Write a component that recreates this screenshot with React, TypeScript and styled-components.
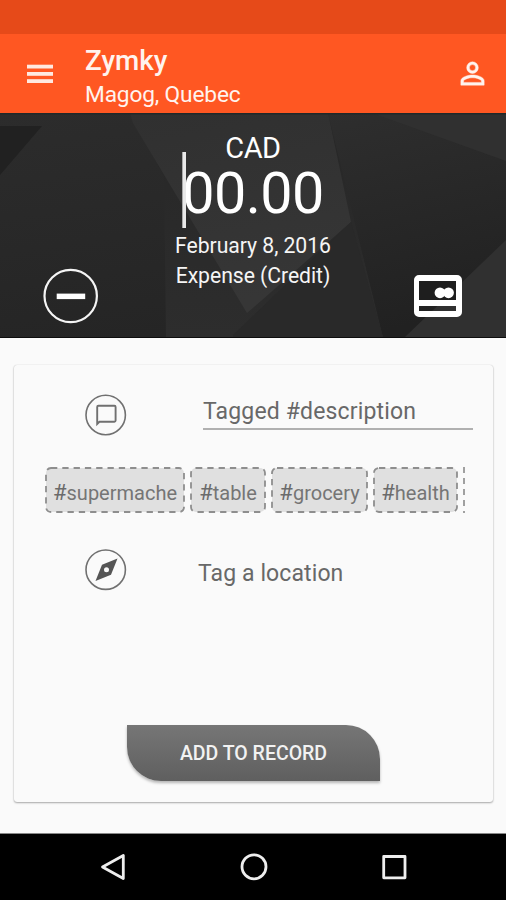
import React from "react";
import styled, { createGlobalStyle } from "styled-components";

const GlobalStyle = createGlobalStyle`
  * { box-sizing: border-box; }
  body { margin: 0; background: #fafafa; font-family: Roboto, sans-serif; }
`;

const Screen = styled.div`
  width: 506px;
  height: 900px;
  display: flex;
  flex-direction: column;
  overflow: hidden;
  background: #fafafa;
`;

const StatusBar = styled.div`
  height: 34px;
  background: #e64a19;
`;

const AppBar = styled.header`
  height: 79px;
  display: flex;
  align-items: flex-start;
  padding: 0 16px 0 27px;
  background: #ff5722;
  color: #fff3ee;
`;

const MenuButton = styled.div`
  width: 58px;
  padding-top: 30px;
  svg { display: block; }
`;

const Titles = styled.div`
  flex: 1;
  padding-top: 10px;
`;

const Title = styled.div`
  font-size: 27.8px;
  line-height: 34px;
  font-weight: 500;
`;

const Subtitle = styled.div`
  font-size: 22.7px;
  line-height: 33px;
  letter-spacing: -0.15px;
`;

const ProfileButton = styled.div`
  padding-top: 22px;
  svg { display: block; }
`;

const Hero = styled.section`
  position: relative;
  height: 225px;
  display: flex;
  justify-content: space-between;
  background: #282828;
  border-bottom: 1px solid #0d0d0d;
  color: #fff;
`;

const HeroBackdrop = styled.svg`
  position: absolute;
  inset: 0;
`;

const HeroSide = styled.div<{ $end?: boolean }>`
  position: relative;
  width: 140px;
  display: flex;
  align-items: flex-end;
  justify-content: ${(p) => (p.$end ? "flex-end" : "flex-start")};
  padding: ${(p) => (p.$end ? "0 43px 19px 0" : "0 0 12px 42px")};
  svg { display: block; }
`;

const Entry = styled.div`
  position: relative;
  flex: 1;
  display: flex;
  flex-direction: column;
  align-items: center;
  padding-top: 18px;
`;

const Currency = styled.div`
  font-size: 29px;
  line-height: 34px;
  letter-spacing: -0.5px;
`;

const Amount = styled.div`
  position: relative;
  height: 61px;
  font-size: 57.5px;
  line-height: 58px;
  letter-spacing: -0.6px;
`;

const Caret = styled.div`
  position: absolute;
  left: 0;
  top: -13px;
  width: 4px;
  height: 76px;
  background: #e9e9e9;
  border-left: 1px solid #aaa;
`;

const Detail = styled.div`
  font-size: 21.2px;
  line-height: 30px;
  letter-spacing: -0.05px;
  color: #f5f5f5;
  white-space: nowrap;
`;

const DetailGroup = styled.div`
  margin-top: 5px;
  text-align: center;
`;

const Content = styled.main`
  flex: 1;
  padding: 27px 13px 0 14px;
`;

const Card = styled.section`
  height: 437px;
  display: flex;
  flex-direction: column;
  border-radius: 3px;
  background: #fafafa;
  box-shadow: 0 1px 2px rgba(0, 0, 0, 0.32), 0 0 1px rgba(0, 0, 0, 0.2);
`;

const FieldRow = styled.div<{ $top: number }>`
  display: flex;
  align-items: flex-start;
  height: 42px;
  margin-top: ${(p) => p.$top}px;
  padding-left: 71px;
  svg { display: block; }
`;

const Field = styled.div`
  width: 270px;
  height: 36px;
  margin-left: 76px;
  border-bottom: 2px solid #b0b0b0;
  color: #686868;
  font-size: 23px;
  line-height: 36px;
  letter-spacing: 0.15px;
  white-space: nowrap;
`;

const Location = styled.div`
  margin-left: 71px;
  color: #686868;
  font-size: 23px;
  line-height: 49px;
  letter-spacing: 0.1px;
`;

const TagStrip = styled.div`
  display: flex;
  gap: 5px;
  height: 46px;
  margin: 31px 0 0 31px;
`;

const TagBox = styled.div<{ $width: number }>`
  position: relative;
  flex: none;
  width: ${(p) => p.$width}px;
  height: 46px;
  text-align: center;
  color: #757575;
  font-size: 20px;
  line-height: 51px;
  white-space: nowrap;
`;

const TagFrame = styled.svg`
  position: absolute;
  left: 0;
  top: 0;
`;

const TagText = styled.span`
  position: relative;
`;

const Hash = styled.span`
  color: #6b6b6b;
  font-size: 22px;
`;

const NextTagEdge = styled.div`
  width: 2px;
  height: 46px;
  background: repeating-linear-gradient(#a0a0a0 0 6px, transparent 6px 11px);
`;

const SubmitButton = styled.button`
  width: 253px;
  height: 56px;
  margin: auto 0 21px 113px;
  padding: 1px 0 0;
  border: 0;
  border-radius: 0 34px 0 34px;
  background: linear-gradient(#767676, #5f5f5f);
  box-shadow: 0 2px 3px rgba(0, 0, 0, 0.28);
  color: #f2f2f2;
  font: 500 19.5px/55px Roboto, sans-serif;
`;

const NavBar = styled.nav`
  height: 67px;
  display: flex;
  align-items: center;
  justify-content: space-between;
  padding: 0 98px 0 99px;
  border-top: 1px solid #888;
  background: #000;
`;

const Tag = ({ label, width }: { label: string; width: number }) => (
  <TagBox $width={width}>
    <TagFrame width={width} height="46">
      <rect x="1" y="1" width={width - 2} height="44" rx="5" fill="#e0e0e0" />
      <rect x="1" y="1" width={width - 2} height="44" rx="5" fill="none" stroke="#8e8e8e" strokeWidth="1.8" strokeDasharray="6.3 5" />
    </TagFrame>
    <TagText><Hash>#</Hash>{label}</TagText>
  </TagBox>
);

const tags = [
  { label: "supermache", width: 140 },
  { label: "table", width: 76 },
  { label: "grocery", width: 97 },
  { label: "health", width: 85 },
];

export default function App() {
  return (
    <>
      <GlobalStyle />
      <Screen>
        <StatusBar />
        <AppBar>
          <MenuButton>
            <svg width="27" height="20" fill="#ffe9e0">
              <rect y="0.7" width="26" height="3.8" />
              <rect y="8" width="26" height="3.8" />
              <rect y="15.2" width="26" height="3.8" />
            </svg>
          </MenuButton>
          <Titles>
            <Title>Zymky</Title>
            <Subtitle>Magog, Quebec</Subtitle>
          </Titles>
          <ProfileButton>
            <svg width="35" height="35" viewBox="0 0 24 24" fill="#fff3ee" stroke="#fff3ee" strokeWidth="0.3">
              <path d="M12 5.9a2.1 2.1 0 1 1 0 4.2 2.1 2.1 0 0 1 0-4.2m0 9c2.97 0 6.1 1.46 6.1 2.1v1.1H5.9V17c0-.64 3.13-2.1 6.1-2.1M12 4a4 4 0 1 0 0 8 4 4 0 0 0 0-8m0 9c-2.67 0-8 1.34-8 4v3h16v-3c0-2.66-5.33-4-8-4" />
            </svg>
          </ProfileButton>
        </AppBar>
        <Hero>
          <HeroBackdrop width="506" height="224">
            <defs>
              <linearGradient id="left" x1="0" y1="0" x2="0.3" y2="1">
                <stop offset="0" stopColor="#2c2c2c" />
                <stop offset="1" stopColor="#252525" />
              </linearGradient>
              <linearGradient id="right" x1="0" y1="0" x2="0.2" y2="1">
                <stop offset="0" stopColor="#2e2e2e" />
                <stop offset="1" stopColor="#212121" />
              </linearGradient>
              <linearGradient id="shard" x1="0" y1="0" x2="0.2" y2="1">
                <stop offset="0" stopColor="#303030" />
                <stop offset="1" stopColor="#363636" />
              </linearGradient>
              <linearGradient id="base" x1="0" y1="0" x2="0" y2="1">
                <stop offset="0" stopColor="#272727" />
                <stop offset="1" stopColor="#2d2d2d" />
              </linearGradient>
            </defs>
            <rect width="506" height="224" fill="url(#left)" />
            <path d="M0 13H42L0 62Z" fill="#212121" />
            <path d="M164 64L166 224H383L328 0H130Z" fill="url(#base)" />
            <path d="M328 0H506V224H383Z" fill="url(#right)" />
            <path d="M130 0H328L351 109L247 200L133 10Z" fill="url(#shard)" />
            <path d="M351 109L233 222V224H383Z" fill="#292929" />
            <path d="M372 0H506V48Z" fill="#303030" />
            <path d="M506 127L405 224H506Z" fill="#303030" />
            <rect width="506" height="1.5" fill="#202829" />
          </HeroBackdrop>
          <HeroSide>
            <svg width="57" height="57" fill="none">
              <circle cx="28.7" cy="28" r="26.2" stroke="#f5f5f5" strokeWidth="2.2" />
              <rect x="14.7" y="25.6" width="28.5" height="5.5" fill="#fff" />
            </svg>
          </HeroSide>
          <Entry>
            <Currency>CAD</Currency>
            <Amount>
              <Caret />
              00.00
            </Amount>
            <DetailGroup>
              <Detail>February 8, 2016</Detail>
              <Detail>Expense (Credit)</Detail>
            </DetailGroup>
          </Entry>
          <HeroSide $end>
            <svg width="50" height="44">
              <path fill="#fff" fillRule="evenodd" d="M6 1H44A5 5 0 0 1 49 6V38A5 5 0 0 1 44 43H6A5 5 0 0 1 1 38V6A5 5 0 0 1 6 1ZM6 7V26H43V7ZM6 32V37H43V32Z" />
              <rect x="6" y="7" width="37" height="19" fill="#1e1e1e" />
              <circle cx="27" cy="18.8" r="5.4" fill="#fff" />
              <circle cx="35.5" cy="18.8" r="5.4" fill="#fff" />
            </svg>
          </HeroSide>
        </Hero>
        <Content>
          <Card>
            <FieldRow $top={29}>
              <svg width="42" height="42" fill="none" stroke="#707070">
                <circle cx="20.7" cy="21" r="19.7" strokeWidth="1.6" />
                <path d="M12.2 30V13Q12.2 11.8 13.4 11.8H29.4Q30.6 11.8 30.6 13V26.6Q30.6 27.8 29.4 27.8H14.4Z" strokeWidth="1.9" />
              </svg>
              <Field>Tagged #description</Field>
            </FieldRow>
            <TagStrip>
              {tags.map((t) => <Tag key={t.label} {...t} />)}
              <NextTagEdge />
            </TagStrip>
            <FieldRow $top={36}>
              <svg width="42" height="42">
                <circle cx="20.7" cy="20.7" r="19.7" fill="none" stroke="#707070" strokeWidth="1.6" />
                <path fillRule="evenodd" fill="#555" d="M32.5 9.5L26 25.8L10.5 32L17 15.8ZM21.5 18.3A2.5 2.5 0 1 0 21.5 23.3A2.5 2.5 0 1 0 21.5 18.3Z" />
              </svg>
              <Location>Tag a location</Location>
            </FieldRow>
            <SubmitButton>ADD TO RECORD</SubmitButton>
          </Card>
        </Content>
        <NavBar>
          <svg width="27" height="30" fill="none" stroke="#eee" strokeWidth="2.8" strokeLinejoin="round">
            <path d="M3.5 15L24.3 3.5V26.5Z" />
          </svg>
          <svg width="30" height="30" fill="none" stroke="#eee" strokeWidth="2.8">
            <circle cx="15" cy="14.8" r="12" />
          </svg>
          <svg width="27" height="30" fill="none" stroke="#eee" strokeWidth="2.8" strokeLinejoin="round">
            <rect x="2.7" y="4.5" width="21.3" height="21.3" />
          </svg>
        </NavBar>
      </Screen>
    </>
  );
}
